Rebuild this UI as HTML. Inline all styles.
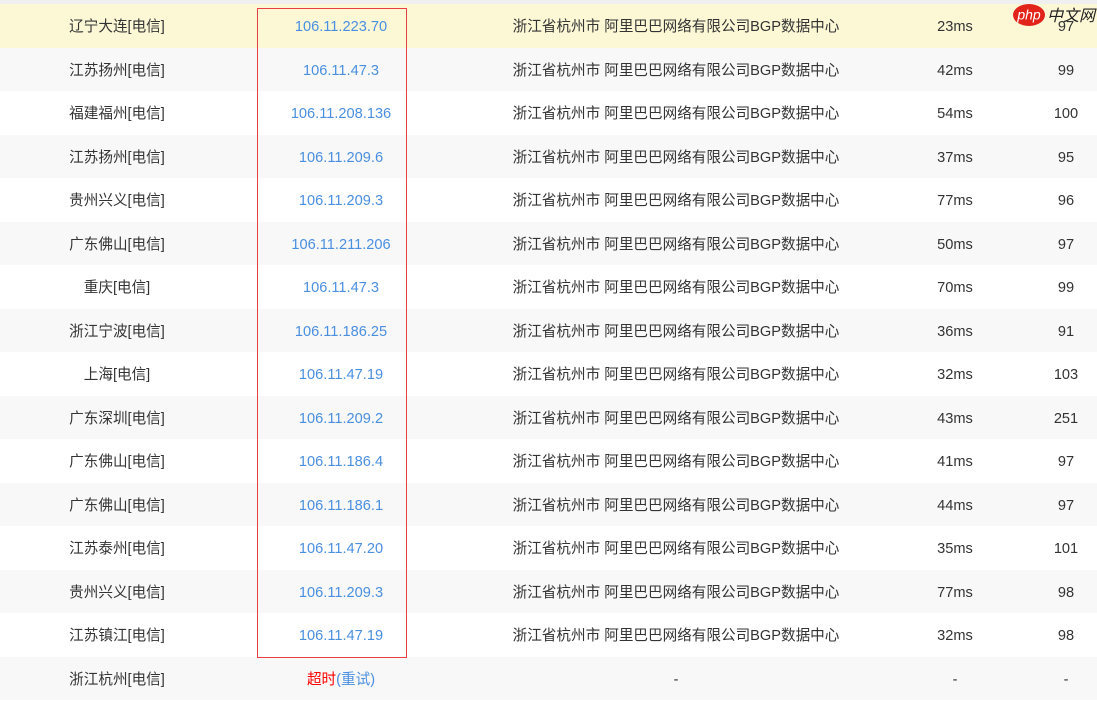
<!DOCTYPE html>
<html><head><meta charset="utf-8"><style>
body{margin:0;width:1097px;height:698px;overflow:hidden;background:#fff;font-family:"Liberation Sans","Noto Sans CJK SC",sans-serif;font-size:14.6px;color:#333;position:relative}
.top{height:4px;background:#f0f0f0}
.r{height:43.53px;position:relative}
.r.y{background:#fcf8d6}
.r span{position:absolute;top:2px;line-height:43.5px;transform:translateX(-50%);white-space:nowrap}
.c1{left:117px}.c2{left:341px;color:#4a8fe0}.c3{left:676px}.c4{left:955px}.c5{left:1066px}
.box{position:absolute;left:257px;top:8px;width:148px;height:648px;border:1px solid #e84040}
.logo{position:absolute;left:1013px;top:3px;height:24px}
</style></head><body>
<div class="top"></div>
<div id="t">
<div class="r y"><span class="c1">辽宁大连[电信]</span><span class="c2">106.11.223.70</span><span class="c3">浙江省杭州市 阿里巴巴网络有限公司BGP数据中心</span><span class="c4">23ms</span><span class="c5">97</span></div>
<div class="r" style="background:#f8f8f8"><span class="c1">江苏扬州[电信]</span><span class="c2">106.11.47.3</span><span class="c3">浙江省杭州市 阿里巴巴网络有限公司BGP数据中心</span><span class="c4">42ms</span><span class="c5">99</span></div>
<div class="r" style="background:#fff"><span class="c1">福建福州[电信]</span><span class="c2">106.11.208.136</span><span class="c3">浙江省杭州市 阿里巴巴网络有限公司BGP数据中心</span><span class="c4">54ms</span><span class="c5">100</span></div>
<div class="r" style="background:#f8f8f8"><span class="c1">江苏扬州[电信]</span><span class="c2">106.11.209.6</span><span class="c3">浙江省杭州市 阿里巴巴网络有限公司BGP数据中心</span><span class="c4">37ms</span><span class="c5">95</span></div>
<div class="r" style="background:#fff"><span class="c1">贵州兴义[电信]</span><span class="c2">106.11.209.3</span><span class="c3">浙江省杭州市 阿里巴巴网络有限公司BGP数据中心</span><span class="c4">77ms</span><span class="c5">96</span></div>
<div class="r" style="background:#f8f8f8"><span class="c1">广东佛山[电信]</span><span class="c2">106.11.211.206</span><span class="c3">浙江省杭州市 阿里巴巴网络有限公司BGP数据中心</span><span class="c4">50ms</span><span class="c5">97</span></div>
<div class="r" style="background:#fff"><span class="c1">重庆[电信]</span><span class="c2">106.11.47.3</span><span class="c3">浙江省杭州市 阿里巴巴网络有限公司BGP数据中心</span><span class="c4">70ms</span><span class="c5">99</span></div>
<div class="r" style="background:#f8f8f8"><span class="c1">浙江宁波[电信]</span><span class="c2">106.11.186.25</span><span class="c3">浙江省杭州市 阿里巴巴网络有限公司BGP数据中心</span><span class="c4">36ms</span><span class="c5">91</span></div>
<div class="r" style="background:#fff"><span class="c1">上海[电信]</span><span class="c2">106.11.47.19</span><span class="c3">浙江省杭州市 阿里巴巴网络有限公司BGP数据中心</span><span class="c4">32ms</span><span class="c5">103</span></div>
<div class="r" style="background:#f8f8f8"><span class="c1">广东深圳[电信]</span><span class="c2">106.11.209.2</span><span class="c3">浙江省杭州市 阿里巴巴网络有限公司BGP数据中心</span><span class="c4">43ms</span><span class="c5">251</span></div>
<div class="r" style="background:#fff"><span class="c1">广东佛山[电信]</span><span class="c2">106.11.186.4</span><span class="c3">浙江省杭州市 阿里巴巴网络有限公司BGP数据中心</span><span class="c4">41ms</span><span class="c5">97</span></div>
<div class="r" style="background:#f8f8f8"><span class="c1">广东佛山[电信]</span><span class="c2">106.11.186.1</span><span class="c3">浙江省杭州市 阿里巴巴网络有限公司BGP数据中心</span><span class="c4">44ms</span><span class="c5">97</span></div>
<div class="r" style="background:#fff"><span class="c1">江苏泰州[电信]</span><span class="c2">106.11.47.20</span><span class="c3">浙江省杭州市 阿里巴巴网络有限公司BGP数据中心</span><span class="c4">35ms</span><span class="c5">101</span></div>
<div class="r" style="background:#f8f8f8"><span class="c1">贵州兴义[电信]</span><span class="c2">106.11.209.3</span><span class="c3">浙江省杭州市 阿里巴巴网络有限公司BGP数据中心</span><span class="c4">77ms</span><span class="c5">98</span></div>
<div class="r" style="background:#fff"><span class="c1">江苏镇江[电信]</span><span class="c2">106.11.47.19</span><span class="c3">浙江省杭州市 阿里巴巴网络有限公司BGP数据中心</span><span class="c4">32ms</span><span class="c5">98</span></div>
<div class="r" style="background:#f8f8f8"><span class="c1">浙江杭州[电信]</span><span class="c2" style="color:#f00">超时<span style="position:static;transform:none;color:#4a8fe0">(重试)</span></span><span class="c3">-</span><span class="c4">-</span><span class="c5">-</span></div>
</div>
<div class="box"></div>
<svg class="logo" width="84" height="24" viewBox="0 0 84 24">
<ellipse cx="16" cy="12" rx="16" ry="11" fill="#e2231a"/>
<text x="16" y="16.5" text-anchor="middle" font-family="Liberation Sans,sans-serif" font-style="italic" font-size="14" fill="#fff">php</text>
<text x="34" y="18" font-family="Noto Sans CJK SC,sans-serif" font-style="italic" font-size="16" fill="#222">中文网</text>
</svg>
</body></html>
